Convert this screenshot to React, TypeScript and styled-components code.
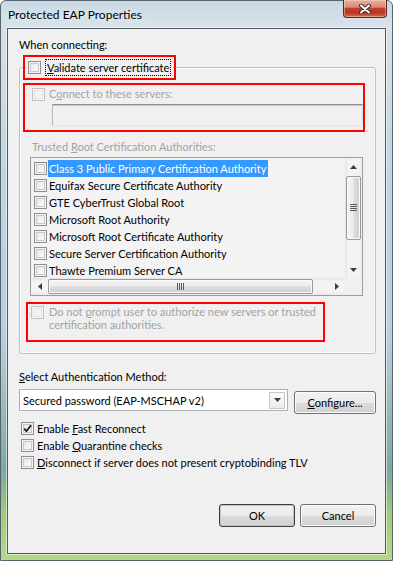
import React from "react";
import styled, { createGlobalStyle } from "styled-components";

const GlobalStyle = createGlobalStyle`
  html, body {
    margin: 0;
    padding: 0;
    background: #fff;
  }
  body {
    font-family: "Lato", "Noto Sans", sans-serif;
    font-size: 11px;
    color: #000;
  }
  #root {
    width: 393px;
    height: 561px;
    overflow: hidden;
  }
`;

const Window = styled.div`
  box-sizing: border-box;
  width: 393px;
  height: 561px;
  display: flex;
  flex-direction: column;
  border: 1px solid #56646f;
  border-radius: 6px 6px 0 0;
  background: linear-gradient(
    180deg,
    #c9d8e3 0%,
    #d6e1e9 4%,
    #c3d5e1 30%,
    #b9d0dc 60%,
    #7fa7a0 84%,
    #9fcb7c 92%,
    #b5d88a 100%
  );
`;

const TitleBar = styled.div`
  height: 27px;
  display: flex;
  align-items: flex-start;
  padding-left: 7px;
`;

const Title = styled.div`
  padding-top: 6px;
  line-height: 15px;
  font-size: 12px;
  text-shadow: 0 0 8px rgba(255, 255, 255, 0.9);
`;

const CloseButton = styled.div`
  box-sizing: border-box;
  margin: -1px 5px 0 auto;
  width: 44px;
  height: 18px;
  border: 1px solid #5e2419;
  border-top: none;
  border-radius: 0 0 4px 4px;
  background: linear-gradient(
    180deg,
    #e8b0a0 0%,
    #dc8a72 42%,
    #c2402a 50%,
    #b8361f 75%,
    #d36a4c 100%
  );
  box-shadow: inset 0 0 0 1px rgba(255, 220, 210, 0.45);
  display: flex;
  align-items: center;
  justify-content: center;
`;

const Client = styled.div`
  position: relative;
  flex: 1;
  margin: 0 6px 6px;
  border: 1px solid #4f5a63;
  box-shadow: 0 0 0 1px rgba(255, 255, 255, 0.55);
  background: #f0f0f0;
  display: flex;
  flex-direction: column;
  padding: 0 9px 0 11px;
`;

const Text = styled.div<{ $disabled?: boolean; $top?: number; $left?: number; $lh?: number }>`
  line-height: ${(p) => p.$lh ?? 16}px;
  white-space: nowrap;
  color: ${(p) => (p.$disabled ? "#a3a3a3" : "#000")};
  margin-top: ${(p) => p.$top ?? 0}px;
  margin-left: ${(p) => p.$left ?? 0}px;
`;

const Key = styled.span`
  text-decoration: underline;
  text-underline-offset: 1px;
`;

const GroupBox = styled.div`
  box-sizing: border-box;
  margin-top: 14px;
  height: 287px;
  border: 1px solid #b9c1c7;
  border-radius: 3px;
  box-shadow: inset 0 0 0 1px #fafafa;
  display: flex;
  flex-direction: column;
  align-items: flex-start;
`;

const GroupHeader = styled.div`
  margin: -12px 0 0 6px;
  padding: 0 2px;
  height: 22px;
  background: #f0f0f0;
  display: flex;
  align-items: center;
  gap: 4px;
`;

const FocusLabel = styled.span`
  box-sizing: border-box;
  height: 17px;
  line-height: 15px;
  padding: 0 1px;
  border: 1px dotted #000;
  white-space: nowrap;
`;

const Row = styled.div<{ $top?: number; $left?: number; $gap?: number; $start?: boolean; $h?: number }>`
  display: flex;
  align-items: ${(p) => (p.$start ? "flex-start" : "center")};
  gap: ${(p) => p.$gap ?? 4}px;
  height: ${(p) => (p.$h ? `${p.$h}px` : "auto")};
  margin-top: ${(p) => p.$top ?? 0}px;
  margin-left: ${(p) => p.$left ?? 0}px;
  white-space: nowrap;
`;

const Box = styled.span<{ $disabled?: boolean; $top?: number }>`
  position: relative;
  box-sizing: border-box;
  flex: none;
  width: 13px;
  height: 13px;
  margin-top: ${(p) => p.$top ?? 0}px;
  border: 1px solid ${(p) => (p.$disabled ? "#c2c2c2" : "#8e8f8f")};
  background: ${(p) =>
    p.$disabled
      ? "#f4f4f4"
      : "linear-gradient(135deg, #dfe1e4 0%, #f4f5f6 60%, #fdfdfd 100%)"};
  box-shadow: ${(p) =>
    p.$disabled
      ? "inset 0 0 0 1px #f6f6f6, inset 0 0 0 2px #e2e2e2"
      : "inset 0 0 0 1px #f4f4f4, inset 0 0 0 2px #c5c8cc"};
  svg {
    position: absolute;
    left: 1px;
    top: 1px;
  }
`;

const Check: React.FC<{ checked?: boolean; disabled?: boolean; top?: number }> = ({
  checked,
  disabled,
  top,
}) => (
  <Box $disabled={disabled} $top={top}>
    {checked && (
      <svg width="9" height="9" viewBox="0 0 9 9">
        <path
          d="M1.2 4.6 L3.4 7.2 L8 1.4"
          fill="none"
          stroke="#1a1a1a"
          strokeWidth="1.8"
        />
      </svg>
    )}
  </Box>
);

const TextBox = styled.div`
  box-sizing: border-box;
  margin: 2px 0 0 32px;
  width: 311px;
  height: 22px;
  border: 1px solid;
  border-color: #8f8f8f #dadada #e6e6e6 #b8b8b8;
  box-shadow: inset 0 1px 0 #c8c8c8;
  background: #f0f0f0;
`;

const ListBox = styled.div`
  box-sizing: border-box;
  margin: 2px 0 0 10px;
  width: 333px;
  height: 139px;
  border: 1px solid #9a9ea3;
  display: grid;
  grid-template-columns: 314px 17px;
  grid-template-rows: 120px 17px;
  background: #f3f3f3;
`;

const Items = styled.div`
  overflow: hidden;
  padding: 2px 0 0 3px;
`;

const Item = styled.div`
  display: flex;
  align-items: center;
  height: 17px;
  gap: 1px;
  white-space: nowrap;
`;

const ItemLabel = styled.span<{ $selected?: boolean }>`
  line-height: 17px;
  padding: 0 2px 0 1px;
  background: ${(p) => (p.$selected ? "#3399ff" : "transparent")};
  color: ${(p) => (p.$selected ? "#fff" : "#000")};
`;

const VScroll = styled.div`
  position: relative;
  background: linear-gradient(90deg, #e6e6e6 0%, #f3f3f3 20%, #f3f3f3 80%, #e9e9e9 100%);
  display: flex;
  flex-direction: column;
  align-items: center;
`;

const HScroll = styled.div`
  position: relative;
  background: linear-gradient(180deg, #e6e6e6 0%, #f3f3f3 20%, #f3f3f3 80%, #e9e9e9 100%);
  display: flex;
  align-items: center;
`;

const ArrowButton = styled.div`
  flex: none;
  width: 17px;
  height: 17px;
  display: flex;
  align-items: center;
  justify-content: center;
`;

const VThumb = styled.div`
  box-sizing: border-box;
  margin-top: 1px;
  width: 15px;
  height: 64px;
  border: 1px solid #9a9a9a;
  border-radius: 2px;
  background: linear-gradient(90deg, #f4f4f4 0%, #ececec 48%, #dcdcdc 52%, #cfcfcf 100%);
  box-shadow: inset 0 0 0 1px #fbfbfb;
  display: flex;
  align-items: center;
  justify-content: center;
`;

const HThumb = styled.div`
  box-sizing: border-box;
  width: 265px;
  height: 15px;
  border: 1px solid #9a9a9a;
  border-radius: 2px;
  background: linear-gradient(180deg, #f4f4f4 0%, #ececec 48%, #dcdcdc 52%, #cfcfcf 100%);
  box-shadow: inset 0 0 0 1px #fbfbfb;
  display: flex;
  align-items: center;
  justify-content: center;
`;

const Spacer = styled.div`
  flex: 1;
`;

const Corner = styled.div`
  background: #f0f0f0;
`;

const Grip: React.FC<{ horizontal?: boolean }> = ({ horizontal }) =>
  horizontal ? (
    <svg width="8" height="7" viewBox="0 0 8 7">
      {[0, 2, 4, 6].map((x) => (
        <rect key={x} x={x} y="0" width="1" height="7" fill="#5a5a5a" />
      ))}
    </svg>
  ) : (
    <svg width="7" height="8" viewBox="0 0 7 8">
      {[0, 2, 4, 6].map((y) => (
        <rect key={y} x="0" y={y} width="7" height="1" fill="#5a5a5a" />
      ))}
    </svg>
  );

const Arrow: React.FC<{ dir: "up" | "down" | "left" | "right" }> = ({ dir }) => {
  const points = {
    up: "0,4 3.5,0 7,4",
    down: "0,0 7,0 3.5,4",
    left: "4,0 4,7 0,3.5",
    right: "0,0 0,7 4,3.5",
  }[dir];
  const vertical = dir === "up" || dir === "down";
  return (
    <svg width={vertical ? 7 : 4} height={vertical ? 4 : 7} viewBox={vertical ? "0 0 7 4" : "0 0 4 7"}>
      <polygon points={points} fill="#3c3c3c" />
    </svg>
  );
};

const Controls = styled.div`
  display: flex;
  align-items: flex-start;
  margin-top: 4px;
`;

const Dropdown = styled.div`
  box-sizing: border-box;
  width: 269px;
  height: 22px;
  border: 1px solid #acb0b5;
  box-shadow: inset 0 0 0 1px #fff;
  background: #fff;
  display: flex;
  align-items: center;
  padding: 0 2px 0 3px;
`;

const DropValue = styled.span`
  flex: 1;
  white-space: nowrap;
`;

const DropButton = styled.div`
  box-sizing: border-box;
  width: 16px;
  height: 17px;
  border: 1px solid #c8c8c8;
  background: linear-gradient(180deg, #fafafa, #ececec);
  display: flex;
  align-items: center;
  justify-content: center;
`;

const Button = styled.div<{ $default?: boolean; $width: number; $top?: number }>`
  box-sizing: border-box;
  width: ${(p) => p.$width}px;
  height: 23px;
  margin-top: ${(p) => p.$top ?? 0}px;
  border: 1px solid ${(p) => (p.$default ? "#3d3d3d" : "#707070")};
  border-radius: 3px;
  background: linear-gradient(180deg, #f2f2f2 0%, #ebebeb 50%, #dddddd 51%, #cfcfcf 100%);
  box-shadow: inset 0 0 0 1px ${(p) => (p.$default ? "#b7c7d3" : "#fcfcfc")};
  display: flex;
  align-items: center;
  justify-content: center;
  line-height: 15px;
  white-space: nowrap;
`;

const ButtonRow = styled.div`
  display: flex;
  justify-content: flex-end;
  gap: 5px;
  margin-top: 33px;
`;

const Highlight = styled.div<{ $x: number; $y: number; $w: number; $h: number }>`
  position: absolute;
  box-sizing: border-box;
  left: ${(p) => p.$x}px;
  top: ${(p) => p.$y}px;
  width: ${(p) => p.$w}px;
  height: ${(p) => p.$h}px;
  border: 2px solid #ff0000;
  pointer-events: none;
`;

const authorities = [
  "Class 3 Public Primary Certification Authority",
  "Equifax Secure Certificate Authority",
  "GTE CyberTrust Global Root",
  "Microsoft Root Authority",
  "Microsoft Root Certificate Authority",
  "Secure Server Certification Authority",
  "Thawte Premium Server CA",
];

export default function App() {
  return (
    <>
      <GlobalStyle />
      <Window>
        <TitleBar>
          <Title>Protected EAP Properties</Title>
          <CloseButton>
            <svg width="12" height="10" viewBox="0 0 12 10">
              <path d="M2 1.5 L10 8.5 M10 1.5 L2 8.5" stroke="#3b2a28" strokeWidth="4" strokeLinecap="round" />
              <path d="M2 1.5 L10 8.5 M10 1.5 L2 8.5" stroke="#ffffff" strokeWidth="2" strokeLinecap="round" />
            </svg>
          </CloseButton>
        </TitleBar>
        <Client>
          <Text $top={8}>When connecting:</Text>
          <GroupBox>
            <GroupHeader>
              <Check />
              <FocusLabel>
                <Key>V</Key>alidate server certificate
              </FocusLabel>
            </GroupHeader>
            <Row $top={8} $left={12} $h={16}>
              <Check disabled />
              <Text $disabled>
                C<Key>o</Key>nnect to these servers:
              </Text>
            </Row>
            <TextBox />
            <Text $disabled $top={13} $left={12}>
              Trusted <Key>R</Key>oot Certification Authorities:
            </Text>
            <ListBox>
              <Items>
                {authorities.map((name, i) => (
                  <Item key={name}>
                    <Check />
                    <ItemLabel $selected={i === 0}>{name}</ItemLabel>
                  </Item>
                ))}
              </Items>
              <VScroll>
                <ArrowButton>
                  <Arrow dir="up" />
                </ArrowButton>
                <VThumb>
                  <Grip />
                </VThumb>
                <Spacer />
                <ArrowButton>
                  <Arrow dir="down" />
                </ArrowButton>
              </VScroll>
              <HScroll>
                <ArrowButton>
                  <Arrow dir="left" />
                </ArrowButton>
                <HThumb>
                  <Grip horizontal />
                </HThumb>
                <Spacer />
                <ArrowButton>
                  <Arrow dir="right" />
                </ArrowButton>
              </HScroll>
              <Corner />
            </ListBox>
            <Row $top={9} $left={11} $gap={5} $start>
              <Check disabled top={1} />
              <Text $disabled $lh={13}>
                Do not <Key>p</Key>rompt user to authorize new servers or trusted
                <br />
                certification authorities.
              </Text>
            </Row>
          </GroupBox>
          <Text $top={15}>
            <Key>S</Key>elect Authentication Method:
          </Text>
          <Controls>
            <Dropdown>
              <DropValue>Secured password (EAP-MSCHAP v2)</DropValue>
              <DropButton>
                <Arrow dir="down" />
              </DropButton>
            </Dropdown>
            <Spacer />
            <Button $width={82} $top={2}>
              <Key>C</Key>onfigure...
            </Button>
          </Controls>
          <Row $top={6} $left={2} $gap={3} $h={17}>
            <Check checked />
            <Text>
              Enable <Key>F</Key>ast Reconnect
            </Text>
          </Row>
          <Row $left={2} $gap={3} $h={17}>
            <Check />
            <Text>
              Enable <Key>Q</Key>uarantine checks
            </Text>
          </Row>
          <Row $left={2} $gap={3} $h={17}>
            <Check />
            <Text>
              <Key>D</Key>isconnect if server does not present cryptobinding TLV
            </Text>
          </Row>
          <ButtonRow>
            <Button $default $width={76}>
              OK
            </Button>
            <Button $width={76}>Cancel</Button>
          </ButtonRow>
          <Highlight $x={15} $y={26} $w={153} $h={25} />
          <Highlight $x={15} $y={54} $w={342} $h={49} />
          <Highlight $x={18} $y={273} $w={299} $h={40} />
        </Client>
      </Window>
    </>
  );
}
